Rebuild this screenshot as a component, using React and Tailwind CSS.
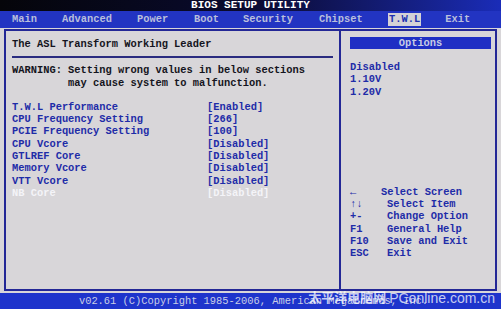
const mono = { fontFamily: '"Liberation Mono", "DejaVu Sans Mono", monospace' }

const menu = [
  { label: 'Main', w: 'w-[50px]' },
  { label: 'Advanced', w: 'w-[75px]' },
  { label: 'Power', w: 'w-[57px]' },
  { label: 'Boot', w: 'w-[49px]' },
  { label: 'Security', w: 'w-[76px]' },
  { label: 'Chipset', w: 'w-[69px]' },
]

const items = [
  ['T.W.L Performance', '[Enabled]'],
  ['CPU Frequency Setting', '[266]'],
  ['PCIE Frequency Setting', '[100]'],
  ['CPU Vcore', '[Disabled]'],
  ['GTLREF Core', '[Disabled]'],
  ['Memory Vcore', '[Disabled]'],
  ['VTT Vcore', '[Disabled]'],
  ['NB Core', '[Disabled]'],
]

const help = [
  ['←', 'Select Screen', 'w-[31px]'],
  ['↑↓', 'Select Item', 'w-[37px]'],
  ['+-', 'Change Option', 'w-[37px]'],
  ['F1', 'General Help', 'w-[37px]'],
  ['F10', 'Save and Exit', 'w-[37px]'],
  ['ESC', 'Exit', 'w-[37px]'],
]

export default function App() {
  return (
    <div
      className="relative flex h-[309px] w-[501px] flex-col overflow-hidden bg-[#d8d6d9] text-[10.4px] font-bold leading-[12.3px]"
      style={mono}
    >
      {/* title */}
      <div className="flex h-[11px] items-center justify-center bg-gradient-to-r from-[#05050a] via-[#0a0a30] to-[#1a2cb8] text-[11px] leading-[11px] text-white">
        BIOS SETUP UTILITY
      </div>

      {/* menu bar */}
      <div className="flex h-[17px] items-center bg-[#2234c2] pl-[12px] text-[#b9bfdc]">
        {menu.map((m) => (
          <span key={m.label} className={m.w}>
            {m.label}
          </span>
        ))}
        <span className="bg-[#d4d2d6] px-[1px] leading-[13px] text-[#2030b0]">T.W.L</span>
        <span className="ml-[24px]">Exit</span>
      </div>

      {/* body */}
      <div className="flex flex-1 px-[4px] pt-[1px] pb-[2px]">
        <div className="flex flex-1 border-2 border-[#232796]">
          <div className="flex w-[335px] flex-col border-r-2 border-[#232796] pl-[6px]">
            <div className="pt-[7px] text-[#141420]">The ASL Transform Working Leader</div>
            <div className="mt-[6px] mr-[6px] h-[2px] bg-[#2a2c80]" />
            <div className="mt-[6px] whitespace-pre text-[#141420]">
              {'WARNING: Setting wrong values in below sections\n         may cause system to malfunction.'}
            </div>
            <div className="mt-[12px] flex flex-col">
              {items.map(([k, v], i) => (
                <div
                  key={k}
                  className={`flex ${i === items.length - 1 ? 'text-[#f4f4f8]' : 'text-[#1e2ca8]'}`}
                >
                  <span className="w-[195px]">{k}</span>
                  <span>{v}</span>
                </div>
              ))}
            </div>
          </div>

          <div className="flex flex-1 flex-col pl-[9px] pr-[4px]">
            <div className="mt-[6px] flex h-[12px] items-center justify-center bg-[#1f2fc4] leading-[12px] text-[#c8cce4]">
              Options
            </div>
            <div className="mt-[12px] flex flex-col text-[#1e2ca8]">
              <span>Disabled</span>
              <span>1.10V</span>
              <span>1.20V</span>
            </div>
            <div className="mt-[88px] flex flex-col text-[#1e2ca8]">
              {help.map(([k, d, w]) => (
                <div key={k} className="flex">
                  <span className={w}>{k}</span>
                  <span>{d}</span>
                </div>
              ))}
            </div>
          </div>
        </div>
      </div>

      {/* footer */}
      <div className="flex h-[16px] items-center justify-center bg-[#1e34cc] pl-[6px] font-normal text-[#c9cde6]">
        v02.61 (C)Copyright 1985-2006, American Megatrends, Inc.
      </div>

      {/* watermark */}
      <div
        className="absolute right-[6px] bottom-[4px] flex items-end gap-[3px] text-white/75"
        style={{ fontFamily: '"Liberation Sans", "Noto Sans CJK SC", sans-serif' }}
      >
        <span className="text-[13px] leading-[14px] font-bold">太平洋电脑网</span>
        <span className="text-[14px] leading-[14px] font-normal">PConline.com.cn</span>
      </div>
    </div>
  )
}
